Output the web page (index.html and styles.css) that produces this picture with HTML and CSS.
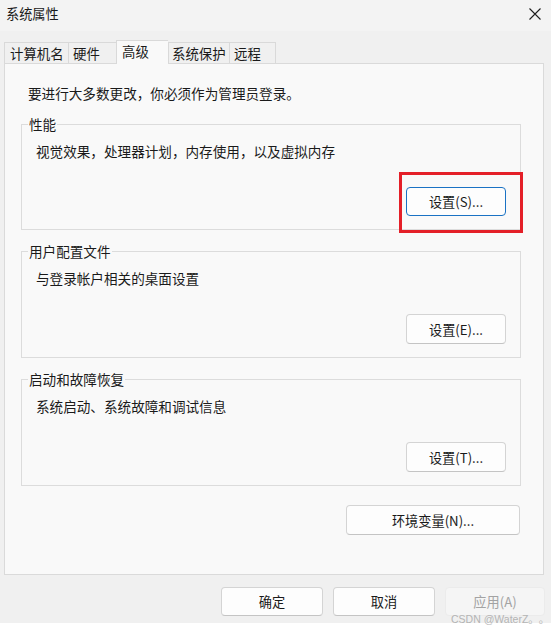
FILE: index.html
```html
<!DOCTYPE html>
<html lang="zh-CN">
<head>
<meta charset="utf-8">
<title>系统属性</title>
<link rel="stylesheet" href="styles.css">
</head>
<body>
<div class="window">
  <div class="titlebar">
    <span class="title">系统属性</span>
    <svg class="close" width="12" height="12" viewBox="0 0 12 12"><path d="M0.5 0.5L11.5 11.5M11.5 0.5L0.5 11.5" stroke="#1f1f1f" stroke-width="1.1" fill="none"/></svg>
  </div>
  <div class="tabs">
    <div class="tab t1">计算机名</div>
    <div class="tab t2">硬件</div>
    <div class="tab t3 active">高级</div>
    <div class="tab t4">系统保护</div>
    <div class="tab t5">远程</div>
  </div>
  <div class="panel">
    <p class="intro">要进行大多数更改，你必须作为管理员登录。</p>
    <fieldset class="group">
      <legend>性能</legend>
      <p class="desc">视觉效果，处理器计划，内存使用，以及虚拟内存</p>
      <div class="actions">
        <span class="btn-wrap">
          <button class="btn focus">设置(S)...</button>
          <span class="highlight"></span>
        </span>
      </div>
    </fieldset>
    <fieldset class="group">
      <legend>用户配置文件</legend>
      <p class="desc">与登录帐户相关的桌面设置</p>
      <div class="actions"><button class="btn">设置(E)...</button></div>
    </fieldset>
    <fieldset class="group">
      <legend>启动和故障恢复</legend>
      <p class="desc">系统启动、系统故障和调试信息</p>
      <div class="actions"><button class="btn">设置(T)...</button></div>
    </fieldset>
    <div class="env-row"><button class="btn env">环境变量(N)...</button></div>
  </div>
  <div class="footer">
    <button class="btn dlg">确定</button>
    <button class="btn dlg">取消</button>
    <button class="btn dlg disabled">应用(A)</button>
  </div>
</div>
<div class="watermark">CSDN @WaterZ。。</div>
</body>
</html>
```

FILE: styles.css
```css
* { box-sizing: border-box; }
html, body {
  margin: 0;
  padding: 0;
  background: #ffffff;
}
body {
  width: 551px;
  height: 632px;
  position: relative;
  overflow: hidden;
  font-family: "Noto Sans CJK SC", "Noto Sans", sans-serif;
  font-size: 13.6px;
  color: #1a1a1a;
  text-spacing-trim: space-all;
}
.window {
  width: 551px;
  height: 623px;
  background: #f0f0f0;
}
.titlebar {
  height: 31px;
  background: #f3f3f3;
  display: flex;
  align-items: center;
  justify-content: space-between;
  padding: 0 10px 0 6px;
}
.title {
  font-size: 13.2px;
  line-height: 18px;
  margin-top: -3px;
}
.close {
  display: block;
  margin-top: -3px;
}
.tabs {
  height: 32px;
  display: flex;
  align-items: flex-end;
  padding-left: 4px;
  position: relative;
  z-index: 2;
}
.tab {
  height: 21px;
  line-height: 20px;
  padding-left: 4px;
  border-top: 1px solid #d9d9d9;
  border-left: 1px solid #d9d9d9;
  background: #f0f0f0;
  white-space: nowrap;
  font-size: 13.4px;
}
.t1 { width: 64px; padding-left: 5px; }
.t2 { width: 48px; }
.t3 { width: 52px; }
.t4 { width: 61px; padding-left: 3px; }
.t5 { width: 47px; border-right: 1px solid #d9d9d9; }
.tab.active {
  height: 24px;
  margin-bottom: -1px;
  background: #f9f9f9;
  padding-left: 5px;
  line-height: 21px;
}
.panel {
  margin-left: 4px;
  width: 540px;
  height: 512px;
  border: 1px solid #dadada;
  background: #f9f9f9;
  padding: 20px 22px 0 16px;
}
.intro {
  margin: 0;
  padding-left: 7px;
  line-height: 18px;
}
.group {
  margin: 13px 0 0;
  border: 1px solid #dcdcdc;
  padding: 0 14px 13px 14px;
  min-width: 0;
}
.group + .group { margin-top: 12px; }
.group legend {
  margin-left: -8px;
  padding: 0 1px;
  line-height: 18px;
}
.desc {
  margin: 9px 0 0;
  line-height: 18px;
}
.actions {
  margin-top: 27px;
  display: flex;
  justify-content: flex-end;
}
.btn-wrap {
  position: relative;
  display: block;
}
.btn {
  display: block;
  width: 100px;
  height: 30px;
  padding: 0;
  font: inherit;
  font-size: 13.2px;
  color: #1a1a1a;
  background: #fdfdfd;
  border: 1px solid #d4d4d4;
  border-bottom-color: #c4c4c4;
  border-radius: 4px;
  text-align: center;
}
.btn.focus {
  border: 1px solid #1a72c4;
  height: 29px;
}
.highlight {
  position: absolute;
  left: -7px;
  top: -15px;
  width: 124px;
  height: 61px;
  border: 3px solid #e41f28;
}
.env-row {
  margin-top: 19px;
  display: flex;
  justify-content: flex-end;
  padding-right: 1px;
}
.btn.env { width: 174px; }
.footer {
  margin-top: 12px;
  display: flex;
  justify-content: flex-end;
  gap: 10px;
  padding-right: 6px;
}
.btn.dlg { width: 102px; height: 29px; }
.btn.dlg.disabled {
  width: 100px;
  color: #a3a3a3;
  background: #f5f5f5;
  border-color: #ebebeb;
}
.watermark {
  position: absolute;
  left: 451px;
  top: 613px;
  font-family: "Liberation Sans", "Noto Sans CJK SC", sans-serif;
  font-size: 10.5px;
  line-height: 13px;
  color: #b4b4b4;
  white-space: nowrap;
}
```
